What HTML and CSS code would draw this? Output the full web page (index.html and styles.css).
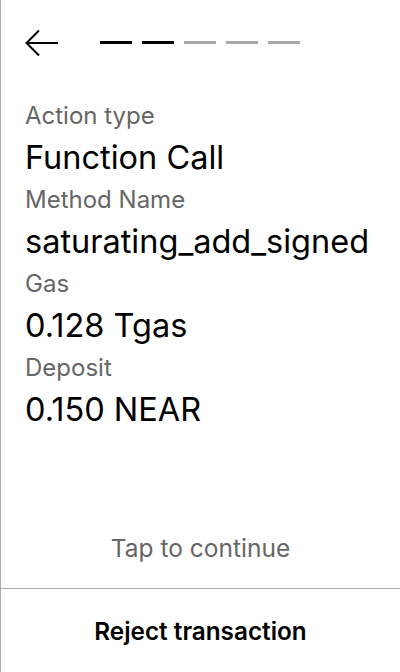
FILE: index.html
```html
<!DOCTYPE html>
<html>
<head>
<meta charset="utf-8">
<link rel="stylesheet" href="styles.css">
</head>
<body>
<div class="screen">
  <div class="header">
    <svg class="back" width="34" height="30" viewBox="0 0 34 30">
      <path d="M1.5 15 H33 M14 2.5 L1.5 15 L14 27.5" fill="none" stroke="#000" stroke-width="2"/>
    </svg>
    <div class="steps">
      <span class="step on"></span>
      <span class="step on"></span>
      <span class="step"></span>
      <span class="step"></span>
      <span class="step"></span>
    </div>
  </div>
  <div class="content">
    <div class="label">Action type</div>
    <div class="value">Function Call</div>
    <div class="label">Method Name</div>
    <div class="value">saturating_add_signed</div>
    <div class="label">Gas</div>
    <div class="value">0.128 Tgas</div>
    <div class="label">Deposit</div>
    <div class="value">0.150 NEAR</div>
  </div>
  <div class="tap">Tap to continue</div>
  <div class="reject">Reject transaction</div>
</div>
</body>
</html>
```

FILE: styles.css
```css
html, body {
  margin: 0;
  padding: 0;
  background: #fff;
}
body {
  font-family: Inter, "Noto Sans", sans-serif;
  color: #000;
}
.screen {
  width: 400px;
  height: 672px;
  box-sizing: border-box;
  border-left: 1px solid #aaa;
  display: flex;
  flex-direction: column;
}
.header {
  display: flex;
  align-items: center;
  padding: 28px 24px 0 24px;
  height: 30px;
}
.back {
  display: block;
}
.steps {
  display: flex;
  gap: 10px;
  margin-left: 41px;
  margin-top: -2px;
}
.step {
  display: block;
  width: 32px;
  height: 3px;
  background: #aaa;
}
.step.on {
  background: #000;
}
.content {
  padding: 40px 24px 0 24px;
  flex: 1;
}
.label {
  font-size: 24px;
  line-height: 36px;
  color: #666;
}
.value {
  font-size: 32.5px;
  line-height: 48px;
}
.tap {
  text-align: center;
  font-size: 24.5px;
  color: #666;
  height: 82px;
  line-height: 84px;
  border-bottom: 1px solid #aaa;
}
.reject {
  text-align: center;
  font-size: 24.3px;
  font-weight: 600;
  height: 83px;
  line-height: 85px;
}
```
